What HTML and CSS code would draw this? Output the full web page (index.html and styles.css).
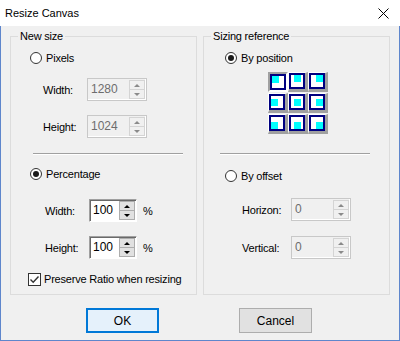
FILE: index.html
```html
<!DOCTYPE html>
<html lang="en">
<head>
  <meta charset="UTF-8">
  <title>Resize Canvas</title>
  <link rel="stylesheet" href="styles.css">
</head>
<body>

<div class="window">
  <div class="titlebar">
    <span class="title">Resize Canvas</span>
    <svg class="close" width="11" height="11" viewBox="0 0 11 11">
      <path d="M0.5 0.5L10.5 10.5M10.5 0.5L0.5 10.5" stroke="#000" stroke-width="1" fill="none"/>
    </svg>
  </div>

  <div class="client">
    <div class="groups">

      <!-- left: new size -->
      <div class="group">
        <span class="group-title">New size</span>

        <div class="row opt left-opt mt11"><span class="radio"></span>Pixels</div>

        <div class="row field left-field mt10">
          <span class="lbl">Width:</span>
          <div class="spin disabled wide">
            <span class="val">1280</span>
            <span class="spin-btns"><span class="sb up"></span><span class="sb down"></span></span>
          </div>
        </div>

        <div class="row field left-field mt14">
          <span class="lbl">Height:</span>
          <div class="spin disabled wide">
            <span class="val">1024</span>
            <span class="spin-btns"><span class="sb up"></span><span class="sb down"></span></span>
          </div>
        </div>

        <div class="sep left-sep"></div>

        <div class="row opt left-opt mt9"><span class="radio checked"></span>Percentage</div>

        <div class="row field pct-field mt15">
          <span class="lbl">Width:</span>
          <div class="spin narrow">
            <span class="val">100</span>
            <span class="spin-btns"><span class="sb up"></span><span class="sb down"></span></span>
          </div>
          <span class="unit">%</span>
        </div>

        <div class="row field pct-field mt14">
          <span class="lbl">Height:</span>
          <div class="spin narrow">
            <span class="val">100</span>
            <span class="spin-btns"><span class="sb up"></span><span class="sb down"></span></span>
          </div>
          <span class="unit">%</span>
        </div>

        <div class="row check-row mt10">
          <span class="checkbox">
            <svg width="11" height="11" viewBox="0 0 11 11"><path d="M1.5 5.5L4.2 8.2L9.5 2.5" stroke="#333" stroke-width="1.4" fill="none"/></svg>
          </span>
          Preserve Ratio when resizing
        </div>
      </div>

      <!-- right: sizing reference -->
      <div class="group">
        <span class="group-title">Sizing reference</span>

        <div class="row opt right-opt mt11"><span class="radio checked"></span>By position</div>

        <div class="pos-grid">
          <div class="cell pressed"><div class="mark tl"><span class="dot"></span></div></div>
          <div class="cell"><div class="mark tc"><span class="dot"></span></div></div>
          <div class="cell"><div class="mark tr"><span class="dot"></span></div></div>
          <div class="cell"><div class="mark ml"><span class="dot"></span></div></div>
          <div class="cell"><div class="mark mc"><span class="dot"></span></div></div>
          <div class="cell"><div class="mark mr"><span class="dot"></span></div></div>
          <div class="cell"><div class="mark bl"><span class="dot"></span></div></div>
          <div class="cell"><div class="mark bc"><span class="dot"></span></div></div>
          <div class="cell"><div class="mark br"><span class="dot"></span></div></div>
        </div>

        <div class="sep right-sep"></div>

        <div class="row opt right-opt mt11"><span class="radio"></span>By offset</div>

        <div class="row field right-field mt12">
          <span class="lbl">Horizon:</span>
          <div class="spin disabled wide">
            <span class="val">0</span>
            <span class="spin-btns"><span class="sb up"></span><span class="sb down"></span></span>
          </div>
        </div>

        <div class="row field right-field mt15">
          <span class="lbl">Vertical:</span>
          <div class="spin disabled wide">
            <span class="val">0</span>
            <span class="spin-btns"><span class="sb up"></span><span class="sb down"></span></span>
          </div>
        </div>
      </div>

    </div>

    <div class="buttons">
      <button class="btn btn-default">OK</button>
      <button class="btn">Cancel</button>
    </div>
  </div>
</div>

</body>
</html>
```

FILE: styles.css
```css
body {
  margin: 0;
  background: #fff;
}
.window {
  width: 400px;
  height: 341px;
  display: flex;
  flex-direction: column;
  font-family: "Liberation Sans", Arial, sans-serif;
  font-size: 11px;
  letter-spacing: -0.2px;
  color: #000;
}
.titlebar {
  height: 26px;
  flex: none;
  background: #fff;
  display: flex;
  align-items: center;
  justify-content: space-between;
  padding: 0 11px 0 5px;
}
.title {
  font-size: 11px;
  letter-spacing: 0;
}
.close {
  display: block;
}
.client {
  flex: 1;
  background: #f0f0f0;
  border: 1px solid #5e86cc;
  border-top: none;
  padding: 10px 9px 0;
}
.groups {
  display: flex;
  gap: 6px;
}
.group {
  position: relative;
  width: 187px;
  height: 259px;
  box-sizing: border-box;
  border: 1px solid #dcdcdc;
}
.group-title {
  position: absolute;
  top: -7px;
  left: 7px;
  padding: 0 2px;
  line-height: 13px;
  background: #f0f0f0;
}
.row {
  display: flex;
  align-items: center;
}
.mt9 { margin-top: 9px; }
.mt10 { margin-top: 10px; }
.mt11 { margin-top: 11px; }
.mt12 { margin-top: 12px; }
.mt14 { margin-top: 14px; }
.mt15 { margin-top: 15px; }

.opt {
  height: 20px;
  gap: 4px;
}
.left-opt { padding-left: 19px; }
.right-opt { padding-left: 21px; }
.radio {
  width: 12px;
  height: 12px;
  box-sizing: border-box;
  border: 1px solid #333;
  border-radius: 50%;
  background: #fff;
  display: flex;
  align-items: center;
  justify-content: center;
}
.radio.checked::after {
  content: "";
  width: 6px;
  height: 6px;
  border-radius: 50%;
  background: #1a1a1a;
}

.field {
  height: 23px;
}
.left-field { padding-left: 32px; }
.pct-field { padding-left: 34px; }
.right-field { padding-left: 38px; }
.lbl {
  width: 44px;
  flex: none;
}
.right-field .lbl {
  width: 49px;
}
.unit {
  margin-left: 6px;
}

.spin {
  height: 23px;
  box-sizing: border-box;
  display: flex;
  background: #fff;
  border: 1px solid;
  border-color: #a0a0a0 #fff #fff #a0a0a0;
  box-shadow: inset 1px 1px #696969;
}
.spin.wide { width: 60px; }
.spin.narrow { width: 48px; }
.val {
  flex: 1;
  padding: 0 0 0 3px;
  line-height: 20px;
  font-size: 12px;
  letter-spacing: 0;
}
.spin-btns {
  width: 17px;
  display: flex;
  flex-direction: column;
  padding: 1px 1px 1px 0;
  box-sizing: border-box;
}
.sb {
  flex: 1;
  display: flex;
  align-items: center;
  justify-content: center;
  background: #e1e1e1;
  border: 1px solid #adadad;
}
.sb.up { border-bottom: none; }
.sb::before {
  content: "";
  width: 0;
  height: 0;
  border-left: 3px solid transparent;
  border-right: 3px solid transparent;
}
.sb.up::before { border-bottom: 3px solid #000; }
.sb.down::before { border-top: 3px solid #000; }

.spin.disabled {
  background: #f0f0f0;
  border-color: #c8c8c8;
  box-shadow: inset -1px -1px #fff;
}
.spin.disabled .val {
  color: #6d6d6d;
}
.spin.disabled .sb {
  background: #f0f0f0;
  border-color: #d4d4d4;
}
.spin.disabled .sb.up::before { border-bottom-color: #8a8a8a; }
.spin.disabled .sb.down::before { border-top-color: #8a8a8a; }

.sep {
  width: 150px;
  height: 0;
  border-top: 1px solid #a0a0a0;
  border-bottom: 1px solid #fff;
}
.left-sep {
  margin: 15px 0 0 22px;
}
.right-sep {
  margin: 19px 0 0 16px;
}

.check-row {
  height: 20px;
  gap: 3px;
  padding-left: 17px;
}
.checkbox {
  width: 13px;
  height: 13px;
  box-sizing: border-box;
  border: 1px solid #333;
  background: #fff;
  display: flex;
  align-items: center;
  justify-content: center;
}
.checkbox svg {
  display: block;
}

.pos-grid {
  display: grid;
  grid-template-columns: repeat(3, 20px);
  grid-template-rows: repeat(3, 20px);
  row-gap: 1px;
  width: 60px;
  margin: 4px 0 0 64px;
}
.cell {
  box-sizing: border-box;
  border-style: solid;
  border-width: 1px 3px 3px 1px;
  border-color: #fff #a0a0a0 #a0a0a0 #fff;
  background: #fff;
}
.cell.pressed {
  border-width: 2px 2px 2px 2px;
  border-color: #a0a0a0 #fff #fff #a0a0a0;
}
.mark {
  width: 16px;
  height: 16px;
  box-sizing: border-box;
  border: 2px solid #000080;
  background: #fff;
  display: flex;
}
.dot {
  width: 7px;
  height: 7px;
  background: #00ffff;
}
.tl { justify-content: flex-start; align-items: flex-start; }
.tc { justify-content: center; align-items: flex-start; }
.tr { justify-content: flex-end; align-items: flex-start; }
.ml { justify-content: flex-start; align-items: center; }
.mc { justify-content: center; align-items: center; }
.mr { justify-content: flex-end; align-items: center; }
.bl { justify-content: flex-start; align-items: flex-end; }
.bc { justify-content: center; align-items: flex-end; }
.br { justify-content: flex-end; align-items: flex-end; }

.buttons {
  display: flex;
  gap: 80px;
  margin-top: 13px;
  padding-left: 76px;
}
.btn {
  width: 73px;
  height: 25px;
  box-sizing: border-box;
  font-family: inherit;
  font-size: 12px;
  color: #000;
  background: #e1e1e1;
  border: 1px solid #adadad;
  padding: 0;
}
.btn-default {
  background: #e5f1fb;
  border-color: #0078d7;
  box-shadow: inset 0 0 0 1px #0078d7;
}
```
